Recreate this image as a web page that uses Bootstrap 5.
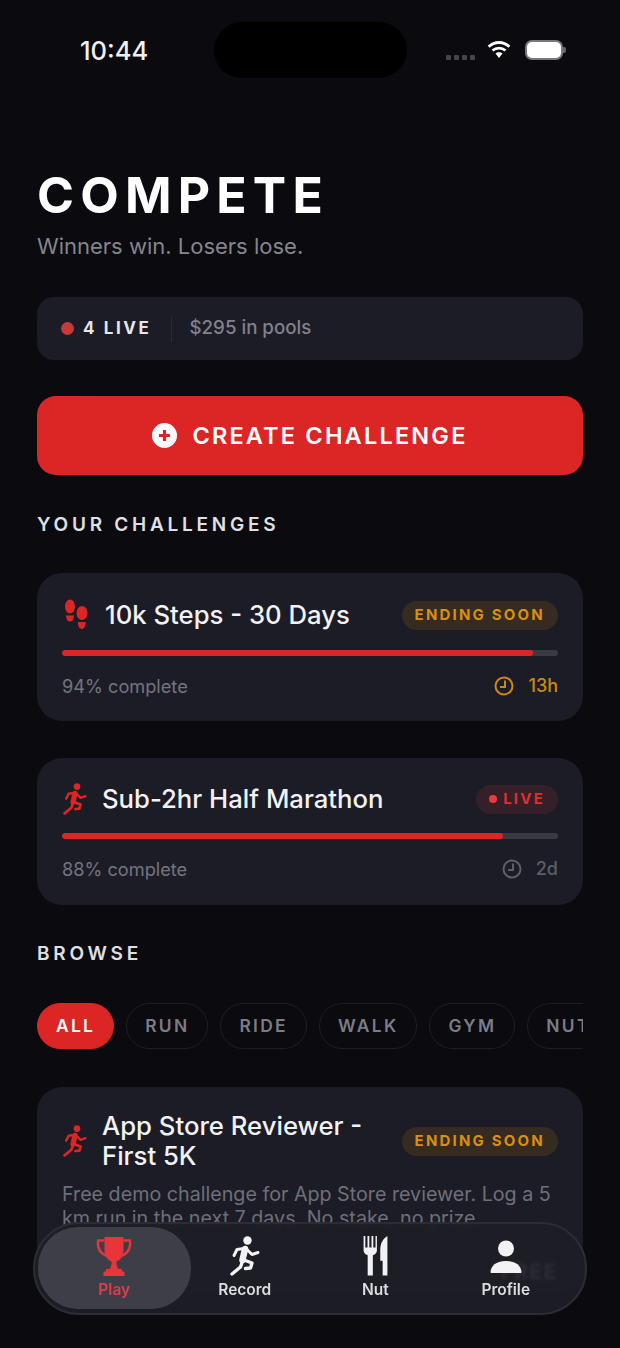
<!DOCTYPE html>
<html lang="en">
<head>
  <meta charset="UTF-8">
  <title>Compete</title>
  <link href="https://cdn.jsdelivr.net/npm/bootstrap@5.3.3/dist/css/bootstrap.min.css" rel="stylesheet">
  <style>
    html, body {
      height: 1348px;
      overflow: hidden;
    }
    body {
      background-color: #0a0a0f;
      font-family: "Inter", "Liberation Sans", sans-serif;
      color: #fff;
    }
    .phone {
      height: 1348px;
      position: relative;
      overflow: hidden;
    }
    .status-row {
      height: 100px;
      padding: 22px 54px 0 80px;
    }
    .status-time {
      font-size: 25.5px;
      font-weight: 500;
      color: #f0f0f2;
      width: 134px;
      line-height: 57px;
    }
    .island {
      width: 193px;
      height: 56px;
      border-radius: 28px;
      background: #000;
    }
    .status-icons {
      margin-left: auto;
      height: 56px;
    }
    .sig-dots {
      display: flex;
      gap: 3px;
      margin-top: 14px;
      margin-right: 11px;
    }
    .sig-dots span {
      width: 5px;
      height: 5px;
      background: #44444c;
      border-radius: 1px;
    }
    .batt {
      width: 38px;
      height: 20px;
      border-radius: 7px;
      background: #fff;
      border: 2px solid #77777c;
      margin-left: 13px;
    }
    .batt-tip {
      width: 3px;
      height: 6px;
      background: #66666c;
      border-radius: 0 2px 2px 0;
    }
    .content {
      padding: 0 37px;
    }
    .page-title {
      font-size: 50px;
      font-weight: 700;
      letter-spacing: 6.2px;
      line-height: 60px;
      margin: 65px 0 0;
    }
    .page-sub {
      font-size: 22px;
      color: #85858e;
      line-height: 30px;
      margin: 6px 0 0;
    }
    .stat-bar {
      height: 63px;
      margin-top: 36px;
      padding: 0 24px;
      background: #1c1c26;
      border-radius: 17px;
    }
    .stat-dot {
      width: 13px;
      height: 13px;
      border-radius: 50%;
      background: #c73a3a;
    }
    .stat-live {
      font-size: 17px;
      font-weight: 700;
      letter-spacing: 2.6px;
      color: #e6e6ea;
      margin-left: 9px;
    }
    .stat-sep {
      width: 1px;
      height: 26px;
      background: #2b2b36;
      margin: 0 18px 0 19px;
    }
    .stat-pool {
      font-size: 18.7px;
      font-weight: 500;
      color: #81818b;
    }
    .btn.create-btn {
      display: flex;
      align-items: center;
      justify-content: center;
      gap: 15px;
      width: 100%;
      height: 79px;
      margin-top: 36px;
      background: #dc2626;
      border: 0;
      border-radius: 19px;
      color: #fff;
      font-size: 23.5px;
      font-weight: 600;
      letter-spacing: 2.2px;
    }
    .sect-label {
      font-size: 19px;
      font-weight: 600;
      letter-spacing: 3.75px;
      color: #e0e0e4;
      line-height: 24px;
    }
    .label-yours {
      margin-top: 38px;
    }
    .label-browse {
      margin-top: 37px;
    }
    .card.chal-card {
      background: #1c1c26;
      border: 0;
      border-radius: 25px;
      padding: 0 25px;
      color: #fff;
    }
    .card-one {
      height: 148px;
      margin-top: 36px;
    }
    .card-two {
      height: 147px;
      margin-top: 37px;
    }
    .card-three {
      height: 205px;
      margin-top: 38px;
    }
    .head-row {
      height: 44px;
      margin-top: 20px;
    }
    .card-two .head-row {
      margin-top: 19px;
    }
    .card-three .head-row {
      height: auto;
      margin-top: 24px;
    }
    .chal-title {
      font-size: 25.7px;
      font-weight: 500;
      color: #f2f2f4;
      line-height: 30px;
    }
    .title-wrap {
      width: 270px;
    }
    .steps-icon {
      margin-right: 15px;
    }
    .run-icon {
      margin-right: 14px;
      flex-shrink: 0;
      color: #dc2626;
    }
    .tag-pill {
      height: 29px;
      padding: 0 13px;
      border-radius: 15px;
      font-size: 15px;
      font-weight: 700;
      letter-spacing: 2.2px;
      flex-shrink: 0;
    }
    .tag-soon {
      background: #352b20;
      color: #d98f0f;
    }
    .tag-live {
      background: #35202a;
      color: #dc2f2f;
      padding: 0 13px;
    }
    .tag-dot {
      width: 8px;
      height: 8px;
      border-radius: 50%;
      background: #ef3a3a;
      margin-right: 6px;
    }
    .progress.chal-prog {
      height: 6px;
      background: #3a3a44;
      border-radius: 4px;
      margin-top: 13px;
    }
    .card-two .progress.chal-prog {
      margin-top: 12px;
    }
    .progress.chal-prog .progress-bar {
      background: #dc2626;
      border-radius: 4px;
    }
    .foot-row {
      margin-top: 18px;
    }
    .prog-text {
      font-size: 18.2px;
      color: #74747e;
      line-height: 24px;
    }
    .time-left {
      font-size: 18px;
      font-weight: 500;
      line-height: 24px;
    }
    .time-left svg {
      margin-right: 14px;
    }
    .time-warn {
      color: #c98a14;
    }
    .time-calm {
      color: #5e5e68;
    }
    .pill-row {
      margin-top: 37px;
      overflow: hidden;
      gap: 12px;
    }
    .cat-pill {
      height: 46px;
      padding: 0 18px;
      border: 1px solid #1e1e26;
      border-radius: 23px;
      font-size: 17.4px;
      font-weight: 600;
      letter-spacing: 2.3px;
      color: #7c7c86;
      flex-shrink: 0;
    }
    .cat-pill.on {
      background: #dc2626;
      border-color: #dc2626;
      color: #fff;
    }
    .desc-text {
      font-size: 19.7px;
      color: #6f6f79;
      line-height: 24px;
      margin: 11px 0 0;
    }
    .price-tag {
      position: absolute;
      right: 25px;
      bottom: 10px;
      font-size: 20px;
      font-weight: 700;
      letter-spacing: 2px;
      line-height: 20px;
      color: #fff;
    }
    .tabbar {
      position: absolute;
      left: 33px;
      top: 1222px;
      width: 554px;
      height: 93px;
      border-radius: 46px;
      background: rgba(30, 30, 38, .94);
      backdrop-filter: blur(1.5px);
      border: 2px solid #2c2c34;
      padding: 0 14px;
    }
    .tab-item {
      position: relative;
      flex: 1 1 0;
      padding-top: 12px;
      font-size: 15.5px;
      font-weight: 600;
      color: #dcdce0;
      line-height: 18px;
    }
    .tab-item span {
      position: relative;
      margin-top: 5px;
    }
    .tab-item svg {
      position: relative;
      height: 40px;
      color: #f2f2f4;
    }
    .tab-item.on {
      color: #d9404a;
    }
    .tab-item.on::before {
      content: "";
      position: absolute;
      left: -11px;
      right: -11px;
      top: 3px;
      bottom: 4px;
      border-radius: 40px;
      background: #3e3e48;
    }
  </style>
</head>
<body>

  <svg width="0" height="0" class="position-absolute">
    <symbol id="runner" viewBox="0 0 32 40">
      <circle cx="18.500" cy="4.500" r="4.200" fill="currentColor"/>
      <path d="M16 13l-2.500 11" fill="none" stroke="currentColor" stroke-width="6.500" stroke-linecap="round"/>
      <path d="M17 12.500l6 6 6-2M15 12.500l-7 1-3 6" fill="none" stroke="currentColor" stroke-width="3" stroke-linecap="round" stroke-linejoin="round"/>
      <path d="M14 24l-2.500 7L3 38M15 24l8 3-1.500 5-5 .5" fill="none" stroke="currentColor" stroke-width="3.400" stroke-linecap="round" stroke-linejoin="round"/>
    </symbol>
    <symbol id="clock" viewBox="0 0 20 20">
      <circle cx="10" cy="10" r="8.500" fill="none" stroke="currentColor" stroke-width="2"/>
      <path d="M11 4.500V11H6" fill="none" stroke="currentColor" stroke-width="2"/>
    </symbol>
  </svg>

  <div class="phone">
    <div class="status-row d-flex">
      <div class="status-time">10:44</div>
      <div class="island"></div>
      <div class="status-icons d-flex align-items-center">
        <div class="sig-dots"><span></span><span></span><span></span><span></span></div>
        <svg width="26" height="20" viewBox="0 0 26 20" fill="#fff">
          <path d="M13 4c3.600 0 6.900 1.400 9.400 3.700l1.900-2A16.500 16.500 0 0 0 13 1 16.500 16.500 0 0 0 1.700 5.700l1.900 2C6.100 5.400 9.400 4 13 4z"/>
          <path d="M13 9.500c2.100 0 4 .8 5.500 2.100l1.900-2A11 11 0 0 0 13 6.700a11 11 0 0 0-7.400 2.900l1.900 2C9 10.300 10.900 9.500 13 9.500z"/>
          <path d="M13 12.300c-1.400 0-2.600.5-3.500 1.300L13 18l3.500-4.400c-.9-.8-2.100-1.300-3.500-1.300z"/>
        </svg>
        <div class="batt"></div>
        <div class="batt-tip"></div>
      </div>
    </div>

    <div class="content">
      <h1 class="page-title">COMPETE</h1>
      <p class="page-sub">Winners win. Losers lose.</p>

      <div class="stat-bar d-flex align-items-center">
        <span class="stat-dot"></span>
        <span class="stat-live">4 LIVE</span>
        <span class="stat-sep"></span>
        <span class="stat-pool">$295 in pools</span>
      </div>

      <button type="button" class="btn create-btn">
        <svg width="25" height="25" viewBox="0 0 25 25"><circle cx="12.500" cy="12.500" r="12.500" fill="#fff"/><path d="M12.500 7v11M7 12.500h11" stroke="#dc2626" stroke-width="3.200"/></svg>
        CREATE CHALLENGE
      </button>

      <div class="sect-label label-yours">YOUR CHALLENGES</div>

      <div class="card chal-card card-one">
        <div class="head-row d-flex align-items-center justify-content-between">
          <div class="d-flex align-items-center">
            <svg class="steps-icon" width="28" height="32" viewBox="0 0 28 32" fill="#dc2626">
              <ellipse cx="8" cy="7.500" rx="5" ry="7"/><path d="M3.800 16.500h8.400l-.9 3.500a3.400 3.400 0 0 1-6.600 0z"/>
              <ellipse cx="20" cy="14" rx="5.500" ry="7"/><path d="M15.700 23h8.400l-1.200 4.500a3.300 3.300 0 0 1-6.400 0z"/>
            </svg>
            <span class="chal-title">10k Steps - 30 Days</span>
          </div>
          <span class="tag-pill tag-soon d-flex align-items-center">ENDING SOON</span>
        </div>
        <div class="progress chal-prog"><div class="progress-bar" style="width:95%"></div></div>
        <div class="foot-row d-flex align-items-center justify-content-between">
          <span class="prog-text">94% complete</span>
          <span class="time-left time-warn d-flex align-items-center"><svg width="20" height="20"><use href="#clock"/></svg>13h</span>
        </div>
      </div>

      <div class="card chal-card card-two">
        <div class="head-row d-flex align-items-center justify-content-between">
          <div class="d-flex align-items-center">
            <svg class="run-icon" width="26" height="32"><use href="#runner"/></svg>
            <span class="chal-title">Sub-2hr Half Marathon</span>
          </div>
          <span class="tag-pill tag-live d-flex align-items-center"><span class="tag-dot"></span>LIVE</span>
        </div>
        <div class="progress chal-prog"><div class="progress-bar" style="width:89%"></div></div>
        <div class="foot-row d-flex align-items-center justify-content-between">
          <span class="prog-text">88% complete</span>
          <span class="time-left time-calm d-flex align-items-center"><svg width="20" height="20"><use href="#clock"/></svg>2d</span>
        </div>
      </div>

      <div class="sect-label label-browse">BROWSE</div>

      <div class="pill-row d-flex">
        <span class="cat-pill on d-flex align-items-center">ALL</span>
        <span class="cat-pill d-flex align-items-center">RUN</span>
        <span class="cat-pill d-flex align-items-center">RIDE</span>
        <span class="cat-pill d-flex align-items-center">WALK</span>
        <span class="cat-pill d-flex align-items-center">GYM</span>
        <span class="cat-pill d-flex align-items-center">NUT</span>
      </div>

      <div class="card chal-card card-three">
        <div class="head-row d-flex align-items-center justify-content-between">
          <div class="d-flex align-items-center">
            <svg class="run-icon" width="26" height="32"><use href="#runner"/></svg>
            <span class="chal-title title-wrap">App Store Reviewer - First 5K</span>
          </div>
          <span class="tag-pill tag-soon d-flex align-items-center">ENDING SOON</span>
        </div>
        <p class="desc-text">Free demo challenge for App Store reviewer. Log a 5 km run in the next 7 days. No stake, no prize.</p>
        <span class="price-tag">FREE</span>
      </div>
    </div>

    <nav class="tabbar d-flex">
      <div class="tab-item on d-flex flex-column align-items-center">
        <svg width="38" viewBox="0 0 38 40" fill="#e8353a">
          <path d="M9.500 1h19v13c0 6-3 10-7 11.500-.3 3 .5 5.500 2 7.500h-9c1.500-2 2.300-4.500 2-7.500-4-1.500-7-5.500-7-11.500z"/>
          <path d="M11 33h16v2.500h2.500V40h-21v-4.500H11z"/>
          <path d="M9.500 4.500H3.200c-1.200 6.500 1.500 12.500 8.300 15.500M28.500 4.500h6.300c1.200 6.500-1.500 12.500-8.300 15.500" fill="none" stroke="#e8353a" stroke-width="2.400"/>
        </svg>
        <span>Play</span>
      </div>
      <div class="tab-item d-flex flex-column align-items-center">
        <svg width="32"><use href="#runner"/></svg>
        <span>Record</span>
      </div>
      <div class="tab-item d-flex flex-column align-items-center">
        <svg width="27" viewBox="0 0 27 42" fill="#f2f2f4">
          <path d="M1 0h1.800v12h2.300V0h1.900v12h2.300V0h1.900v12h2.300V0H15v15c0 2.500-1.500 4.500-4.300 5.200V41.500H5.300V20.200C2.500 19.500 1 17.500 1 15z"/>
          <path d="M26 0v41.500h-5V26h-2.500v-11C18.500 8 21 3 26 0z"/>
        </svg>
        <span>Nut</span>
      </div>
      <div class="tab-item d-flex flex-column align-items-center">
        <svg width="32" viewBox="0 0 32 40" fill="#f2f2f4">
          <circle cx="16" cy="12.500" r="8"/>
          <path d="M.5 36c.5-6 5-11 15.500-11s15 5 15.500 11c0 .5-.5 1-1 1H1.500c-.5 0-1-.5-1-1z"/>
        </svg>
        <span>Profile</span>
      </div>
    </nav>
  </div>

</body>
</html>
